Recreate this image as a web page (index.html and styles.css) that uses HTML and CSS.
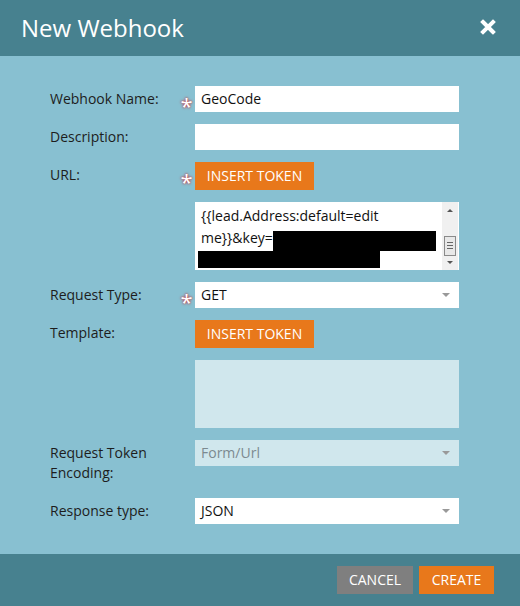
FILE: index.html
```html
<!DOCTYPE html>
<html>
<head>
<meta charset="utf-8">
<link rel="stylesheet" href="styles.css">
</head>
<body>
<div class="dialog">
  <div class="header">
    <div class="title">New Webhook</div>
    <svg class="close" width="16" height="16" viewBox="0 0 16 16"><path d="M3 3 L13 13 M13 3 L3 13" stroke="#fff" stroke-width="4" stroke-linecap="square"/></svg>
  </div>
  <div class="body">
    <div class="row">
      <div class="label">Webhook Name:</div>
      <div class="star">*</div>
      <div class="input">GeoCode</div>
    </div>
    <div class="row">
      <div class="label">Description:</div>
      <div class="star"></div>
      <div class="input"></div>
    </div>
    <div class="row">
      <div class="label">URL:</div>
      <div class="star">*</div>
      <div><div class="btn-token">INSERT TOKEN</div></div>
    </div>
    <div class="row">
      <div class="label"></div>
      <div class="star"></div>
      <div class="textarea">
        <div class="ta-text">{{lead.Address:default=edit<br>me}}&amp;key=<span class="redact r1"></span><br><span class="redact r2"></span></div>
        <div class="scrollbar">
          <svg width="16" height="68" viewBox="0 0 16 68">
            <path d="M5 10 L8 7 L11 10 Z" fill="#555"/>
            <rect x="2.5" y="34.5" width="11" height="19" fill="#e8e8e8" stroke="#8a8a8a"/>
            <path d="M5 40.5 H11 M5 43.5 H11 M5 46.5 H11" stroke="#666"/>
            <path d="M5 59 L8 62 L11 59 Z" fill="#555"/>
          </svg>
        </div>
      </div>
    </div>
    <div class="row">
      <div class="label">Request Type:</div>
      <div class="star">*</div>
      <div class="input select">GET<span class="arrow"></span></div>
    </div>
    <div class="row">
      <div class="label">Template:</div>
      <div class="star"></div>
      <div><div class="btn-token">INSERT TOKEN</div></div>
    </div>
    <div class="row">
      <div class="label"></div>
      <div class="star"></div>
      <div class="textarea disabled"></div>
    </div>
    <div class="row">
      <div class="label">Request Token Encoding:</div>
      <div class="star"></div>
      <div class="input select disabled">Form/Url<span class="arrow"></span></div>
    </div>
    <div class="row">
      <div class="label">Response type:</div>
      <div class="star"></div>
      <div class="input select">JSON<span class="arrow"></span></div>
    </div>
  </div>
  <div class="footer">
    <div class="btn cancel">CANCEL</div>
    <div class="btn create">CREATE</div>
  </div>
</div>
</body>
</html>
```
FILE: styles.css
```css
html, body {
  margin: 0;
  padding: 0;
}
body {
  font-family: "Open Sans", "Noto Sans", sans-serif;
}
.dialog {
  width: 520px;
  height: 606px;
  display: flex;
  flex-direction: column;
  background: #88c0d1;
}
.header {
  height: 56px;
  background: #47818f;
  display: flex;
  align-items: center;
  justify-content: space-between;
  padding: 0 24px 0 21px;
  box-sizing: border-box;
}
.title {
  color: #fff;
  font-size: 24px;
  padding-bottom: 2px;
}
.close {
  margin-top: -2px;
}
.body {
  flex: 1;
  padding: 30px 0 0 50px;
  display: flex;
  flex-direction: column;
  gap: 12px;
}
.row {
  display: grid;
  grid-template-columns: 128px 17px 264px;
  align-items: start;
}
.label {
  font-size: 14px;
  line-height: 20px;
  color: #1d1d1d;
  padding: 3px 0;
  width: 112px;
}
.star {
  color: #fff;
  font-size: 22px;
  line-height: 26px;
  height: 26px;
  padding-top: 6px;
  box-sizing: border-box;
  text-shadow: 0 0 3px #c0404a, 0 0 2px #c0404a;
  text-align: center;
}
.input {
  height: 26px;
  background: #fff;
  font-size: 14px;
  line-height: 26px;
  padding-left: 6px;
  color: #111;
  position: relative;
}
.input.disabled {
  background: #d0e7ed;
  color: #7c8a90;
}
.arrow {
  position: absolute;
  right: 9px;
  top: 11px;
  width: 0;
  height: 0;
  border-left: 4px solid transparent;
  border-right: 4px solid transparent;
  border-top: 4px solid #999;
}
.btn-token {
  display: inline-block;
  background: #e8781b;
  color: #fff;
  font-size: 14px;
  line-height: 28px;
  height: 28px;
  width: 119px;
  text-align: center;
  vertical-align: top;
}
.textarea {
  height: 68px;
  background: #fff;
  position: relative;
  overflow: hidden;
}
.textarea.disabled {
  background: #d0e7ed;
}
.ta-text {
  font-size: 14px;
  line-height: 22px;
  color: #111;
  padding: 3px 0 0 6px;
}
.redact {
  display: inline-block;
  background: #000;
  vertical-align: top;
}
.r1 {
  width: 163px;
  height: 20px;
  margin-top: 4px;
}
.r2 {
  width: 182px;
  height: 17px;
  margin-left: -3px;
}
.scrollbar {
  position: absolute;
  right: 1px;
  top: 0;
  width: 16px;
  height: 68px;
  background: #f0f0f0;
}
.scrollbar svg {
  display: block;
}
.footer {
  height: 52px;
  background: #47818f;
  display: flex;
  justify-content: flex-end;
  align-items: flex-start;
  gap: 6px;
  padding: 12px 26px 0 0;
  box-sizing: border-box;
}
.btn {
  color: #fff;
  font-size: 14px;
  height: 28px;
  line-height: 28px;
  text-align: center;
}
.cancel {
  background: #7f7f7f;
  width: 76px;
}
.create {
  background: #e8781b;
  width: 75px;
}
```
